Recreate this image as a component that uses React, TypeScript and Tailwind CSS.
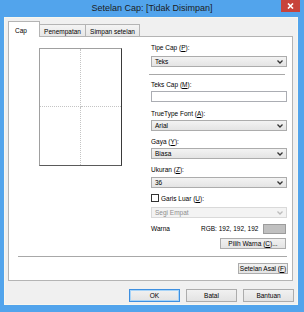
import React from "react";

function Chevron({ color = "#333333" }: { color?: string }) {
  return (
    <svg width="6" height="4" viewBox="0 0 6 4" className="shrink-0">
      <path d="M0.5 0.5 L3 3 L5.5 0.5" fill="none" stroke={color} strokeWidth="1.3" />
    </svg>
  );
}

function Select({ value, disabled = false }: { value: string; disabled?: boolean }) {
  return (
    <div
      className={`h-[11px] flex items-center justify-between pl-[3px] pr-[3px] border ${
        disabled
          ? "border-[#d9d9d9] bg-[#f3f3f3] text-[#8e8e8e]"
          : "border-[#acacac] bg-gradient-to-b from-[#f3f3f3] to-[#e4e4e4] text-black"
      }`}
    >
      <span className="leading-[9px]">{value}</span>
      <Chevron color={disabled ? "#bcbcbc" : "#333333"} />
    </div>
  );
}

function Label({ text, hot, className = "" }: { text: string; hot: string; className?: string }) {
  return (
    <div className={`h-[9px] leading-[9px] ${className}`}>
      {text} (<u>{hot}</u>):
    </div>
  );
}

function Button({ children, className = "", isDefault = false }: { children: React.ReactNode; className?: string; isDefault?: boolean }) {
  return (
    <div
      className={`flex items-center justify-center border bg-gradient-to-b from-[#f1f1f1] to-[#e3e3e3] text-black ${
        isDefault ? "border-[#3d8fe0] shadow-[inset_0_0_0_1px_#a8d4f8]" : "border-[#acacac]"
      } ${className}`}
    >
      {children}
    </div>
  );
}

export default function App() {
  return (
    <div className="w-[304px] h-[312px] bg-[#52a4ec] flex flex-col font-['Liberation_Sans',Arial,sans-serif] text-[6.5px] text-black">
      {/* Title bar */}
      <div className="h-[17px] flex items-start shrink-0">
        <div className="w-[23px] shrink-0" />
        <div className="flex-1 h-[17px] flex items-center justify-center text-[9px] text-[#1c1c1c] whitespace-nowrap">
          Setelan Cap: [Tidak Disimpan]
        </div>
        <div className="w-[19px] h-[12px] mr-[4px] shrink-0 bg-[#c8433b] flex items-center justify-center">
          <svg width="7" height="6" viewBox="0 0 7 6">
            <path d="M1 0.5 L6 5.5 M6 0.5 L1 5.5" stroke="#ffffff" strokeWidth="1.6" />
          </svg>
        </div>
      </div>

      {/* Client area */}
      <div className="flex-1 ml-[4px] mr-[6px] mb-[7px] border border-[#f7f7ef] bg-[#f0f0f0] flex flex-col">
        {/* Tabs */}
        <div className="h-[16px] mt-[3px] ml-[3px] flex items-end shrink-0">
          <div className="relative z-10 w-[32px] h-[16px] bg-white border border-b-0 border-[#b4b4b4] pl-[6px] pt-[4px] leading-[9px]">
            Cap
          </div>
          <div className="w-[46px] h-[13px] bg-gradient-to-b from-[#f4f4f4] to-[#e6e6e6] border border-l-0 border-b-0 border-[#b4b4b4] flex items-center justify-center leading-[9px]">
            Penempatan
          </div>
          <div className="w-[54px] h-[13px] bg-gradient-to-b from-[#f4f4f4] to-[#e6e6e6] border border-l-0 border-b-0 border-[#b4b4b4] flex items-center justify-center leading-[9px]">
            Simpan setelan
          </div>
        </div>

        {/* Tab panel */}
        <div className="h-[245px] -mt-px ml-[3px] mr-[4px] bg-white border border-[#b4b4b4] flex flex-col shrink-0">
          <div className="flex">
            {/* Preview page */}
            <div className="ml-[30px] mt-[11px] w-[83px] h-[118px] border border-t-[#a0a0a0] border-l-[#a0a0a0] border-r-[#3a3a3a] border-b-[#5a5a5a] grid grid-cols-[41px_1fr] grid-rows-[58px_1fr]">
              <div className="border-r border-b border-dotted border-[#c4c4c4]" />
              <div className="border-b border-dotted border-[#c4c4c4]" />
              <div className="border-r border-dotted border-[#c4c4c4]" />
              <div />
            </div>

            {/* Settings column */}
            <div className="ml-[29px] w-[136px] flex flex-col">
              <Label text="Tipe Cap" hot="P" className="mt-[6px]" />
              <div className="mt-[4px]">
                <Select value="Teks" />
              </div>
              <div className="mt-[7px] -ml-[2px] w-[136px] h-px bg-[#a8a8a8]" />
              <Label text="Teks Cap" hot="M" className="mt-[5px]" />
              <div className="mt-[2px] h-[11px] border border-[#abadb3] bg-white" />
              <Label text="TrueType Font" hot="A" className="mt-[7px]" />
              <div className="mt-[2px]">
                <Select value="Arial" />
              </div>
              <Label text="Gaya" hot="Y" className="mt-[6px]" />
              <div className="mt-[2px]">
                <Select value="Biasa" />
              </div>
              <Label text="Ukuran" hot="Z" className="mt-[6px]" />
              <div className="mt-[3px]">
                <Select value="36" />
              </div>
              <div className="mt-[5px] h-[10px] flex items-center gap-[2px]">
                <div className="w-[8px] h-[8px] border border-[#333] bg-white" />
                <span className="leading-[9px]">
                  Garis Luar (<u>U</u>):
                </span>
              </div>
              <div className="mt-[4px]">
                <Select value="Segi Empat" disabled />
              </div>
              <div className="mt-[6px] h-[10px] flex items-center">
                <span className="w-[50px]">Warna</span>
                <span className="flex-1">RGB: 192, 192, 192</span>
                <div className="w-[23px] h-[10px] border border-[#9c9c9c] bg-[#c0c0c0] mr-px" />
              </div>
              <Button className="mt-[4px] self-end mr-px w-[66px] h-[11px]">
                <span>
                  Pilih Warna (<u>C</u>)...
                </span>
              </Button>
            </div>
          </div>

          <div className="mt-[7px] ml-[9px] mr-[5px] h-px bg-[#a8a8a8]" />
          <Button className="mt-[6px] self-end mr-[4px] w-[50px] h-[11px]">
            <span>
              Setelan Asal (<u>F</u>)
            </span>
          </Button>
        </div>

        {/* Dialog buttons */}
        <div className="mt-[8px] mr-[3px] flex justify-end gap-[6px]">
          <Button isDefault className="w-[51px] h-[13px]">OK</Button>
          <Button className="w-[51px] h-[13px]">Batal</Button>
          <Button className="w-[51px] h-[13px]">Bantuan</Button>
        </div>
      </div>
    </div>
  );
}
